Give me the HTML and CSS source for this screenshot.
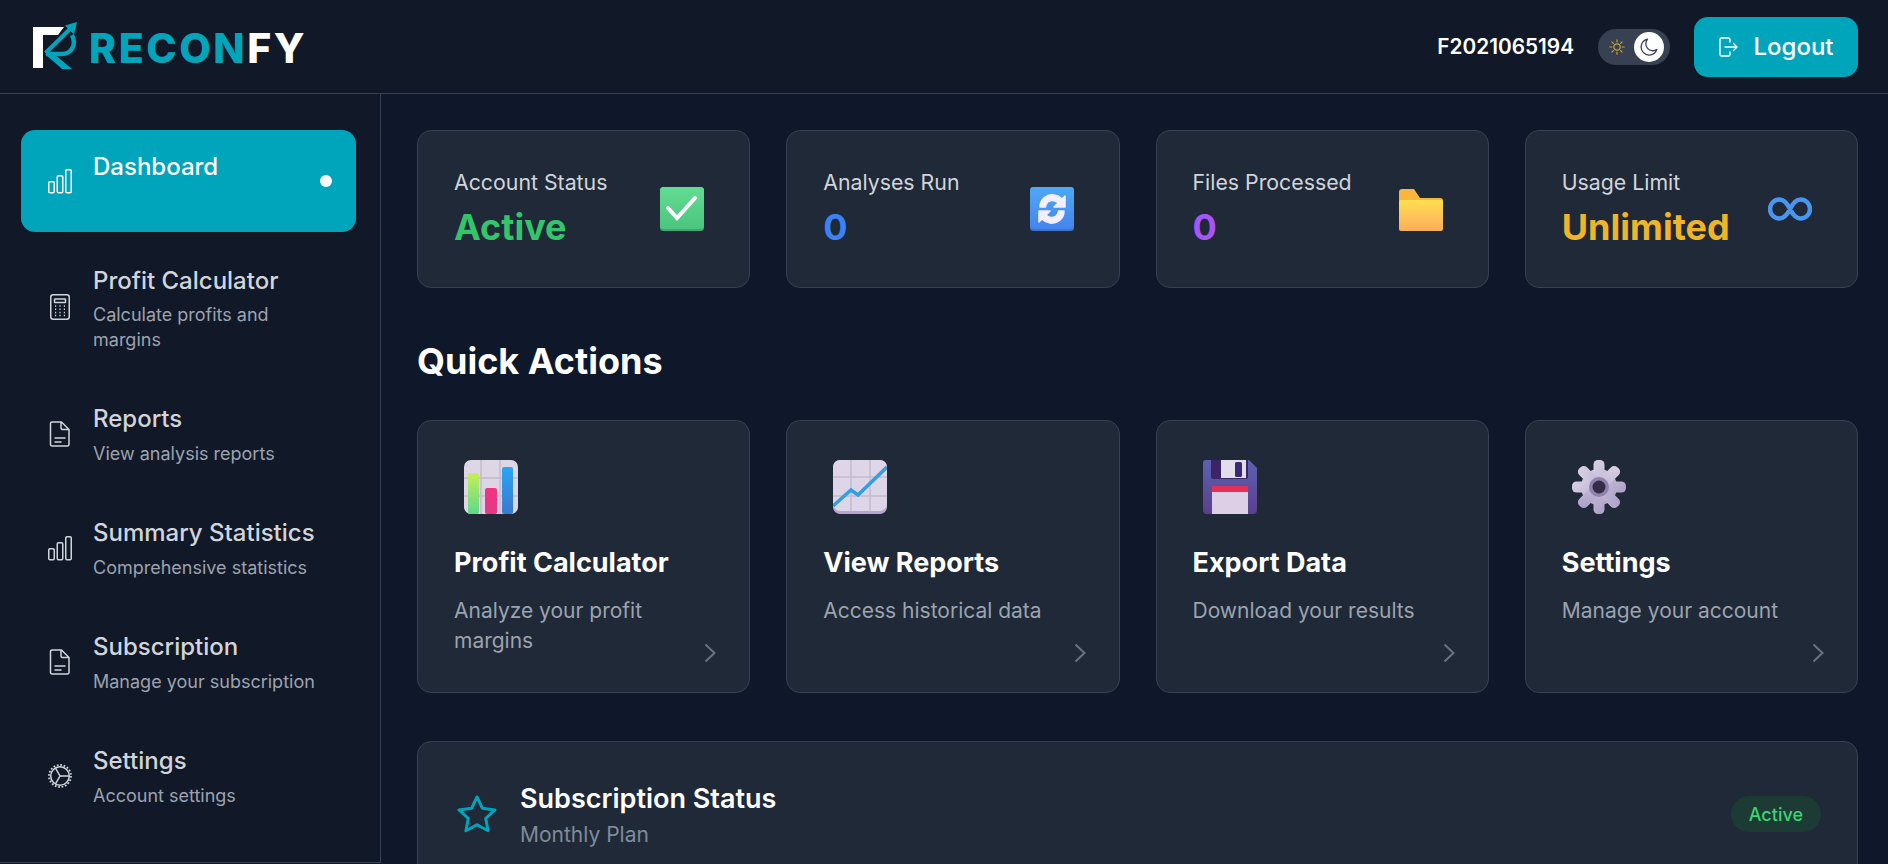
FILE: index.html
```html
<!DOCTYPE html>
<html lang="en">
<head>
    <meta charset="UTF-8">
    <meta name="viewport" content="width=device-width, initial-scale=1.0">
    <title>Reconfy Dashboard</title>
    <link rel="stylesheet" href="styles.css">
</head>
<body>
    <svg class="sprites" width="0" height="0">
        <defs>
            <linearGradient id="grad-green" x1="0" y1="0" x2="0" y2="1"><stop offset="0" stop-color="#63dc93"/><stop offset="1" stop-color="#4bc47f"/></linearGradient>
            <linearGradient id="grad-blue" x1="0" y1="0" x2="0" y2="1"><stop offset="0" stop-color="#4fa8f5"/><stop offset="1" stop-color="#4585ec"/></linearGradient>
            <linearGradient id="grad-folder" x1="0" y1="0" x2="0" y2="1"><stop offset="0" stop-color="#ffdf50"/><stop offset="1" stop-color="#fcac5c"/></linearGradient>
            <linearGradient id="grad-lime" x1="0" y1="0" x2="0" y2="1"><stop offset="0" stop-color="#c6ee58"/><stop offset="1" stop-color="#5ed98a"/></linearGradient>
            <linearGradient id="grad-pink" x1="0" y1="0" x2="0" y2="1"><stop offset="0" stop-color="#f0357f"/><stop offset="1" stop-color="#e43a86"/></linearGradient>
            <linearGradient id="grad-bar" x1="0" y1="0" x2="0" y2="1"><stop offset="0" stop-color="#2aa6f2"/><stop offset="1" stop-color="#3a78d0"/></linearGradient>
            <linearGradient id="grad-disk" x1="0" y1="0" x2="0" y2="1"><stop offset="0" stop-color="#5b62b2"/><stop offset="1" stop-color="#5b3f8c"/></linearGradient>
            <linearGradient id="grad-gear" gradientUnits="userSpaceOnUse" x1="6" y1="4" x2="48" y2="50"><stop offset="0" stop-color="#e0dbe8"/><stop offset="1" stop-color="#a596c4"/></linearGradient>
            <symbol id="i-bars" viewBox="0 0 24 24"><g fill="none" stroke="currentColor" stroke-width="1.5"><rect x="0.75" y="12.75" width="5.5" height="11" rx="1.2"/><rect x="9.25" y="6.75" width="5.5" height="17" rx="1.2"/><rect x="17.75" y="0.75" width="5.5" height="23" rx="1.2"/></g></symbol>
            <symbol id="i-doc" viewBox="0 0 24 26"><path d="M4 1h9.500l7.500 7.500v15a1.500 1.500 0 0 1-1.500 1.500h-15.500a1.500 1.500 0 0 1-1.500-1.500v-21a1.500 1.500 0 0 1 1.500-1.500z M13 1v6a1.500 1.500 0 0 0 1.500 1.500h6.500 M7 17h10 M7 21h6" fill="none" stroke="currentColor" stroke-width="1.5" stroke-linecap="round" stroke-linejoin="round"/></symbol>
            <symbol id="i-calc" viewBox="0 0 24 26"><g fill="none" stroke="currentColor" stroke-width="1.500"><rect x="2.750" y="0.750" width="18.500" height="24.500" rx="2.500"/><rect x="6.500" y="5" width="11" height="3.500" rx="0.500"/></g><path d="M7 12h1.200M11.400 12h1.200M15.800 12h1.200M7 15.200h1.200M11.400 15.200h1.200M15.800 15.200h1.200M7 18.400h1.200M11.400 18.400h1.200M15.800 18.400h1.200M7 21.400h1.200M11.400 21.400h1.200M15.800 21.400h1.200" stroke="currentColor" stroke-width="1.500"/></symbol>
            <symbol id="i-gear" viewBox="0 0 24 24"><g fill="none" stroke="currentColor"><circle cx="12" cy="12" r="9.300" stroke-width="1.500"/><circle cx="12" cy="12" r="11" stroke-width="1.800" stroke-dasharray="1.700 1.750"/><path d="M12 12L21 12M12 12L7.500 4.200M12 12L7.500 19.800" stroke-width="1.500"/></g></symbol>
        </defs>
    </svg>

    <header class="topbar">
        <div class="brand">
            <svg class="brand-mark" width="46" height="50" viewBox="0 0 46 50">
                <path d="M1 6H32L26 14H11V47H1Z" fill="#fff"/>
                <g fill="#00a5bb">
                    <path d="M45 1L33 4.500L42 13.500Z"/>
                    <path d="M13 33H22L40 48H30Z"/>
                </g>
                <g fill="none" stroke="#00a5bb">
                    <path d="M13.500 32L38 8" stroke-width="4"/>
                    <path d="M40 14C45 24 39 33 30 33H14" stroke-width="4.500"/>
                </g>
            </svg>
            <span class="brand-text">RECON<span class="brand-accent">FY</span></span>
        </div>
        <div class="topbar-right">
            <span class="user-id">F2021065194</span>
            <div class="theme-toggle">
                <svg class="sun" width="16" height="16" viewBox="0 0 16 16" fill="none" stroke="#c9a035" stroke-width="1.200" stroke-linecap="round"><circle cx="8" cy="8" r="3.200"/><path d="M8 .8v2M8 13.200v2M.8 8h2M13.200 8h2M2.900 2.900l1.400 1.400M11.700 11.700l1.400 1.400M2.900 13.100l1.400-1.400M11.700 4.300l1.400-1.400"/></svg>
                <span class="knob">
                    <svg width="18" height="18" viewBox="0 0 18 18" fill="none" stroke="#374151" stroke-width="1.300" stroke-linejoin="round"><path d="M7.500 1.200A8 8 0 1 0 16.800 11.500 7 7 0 0 1 7.500 1.200z"/></svg>
                </span>
            </div>
            <button class="logout">
                <svg width="20" height="20" viewBox="0 0 20 20" fill="none" stroke="#fff" stroke-width="1.400" stroke-linecap="round" stroke-linejoin="round"><path d="M12 5V2.500A1.500 1.500 0 0 0 10.500 1h-7A1.500 1.500 0 0 0 2 2.500v15A1.500 1.500 0 0 0 3.500 19h7a1.500 1.500 0 0 0 1.500-1.500V15"/><path d="M7 10h12M15.500 6.500L19 10l-3.500 3.500"/></svg>
                <span>Logout</span>
            </button>
        </div>
    </header>

    <div class="layout">
        <nav class="sidebar">
            <a class="nav-item active">
                <svg class="nav-icon"><use href="#i-bars"/></svg>
                <div class="nav-text">
                    <div class="nav-title">Dashboard</div>
                    <div class="nav-desc">&nbsp;</div>
                </div>
                <span class="nav-dot"></span>
            </a>
            <a class="nav-item">
                <svg class="nav-icon"><use href="#i-calc"/></svg>
                <div class="nav-text">
                    <div class="nav-title">Profit Calculator</div>
                    <div class="nav-desc">Calculate profits and margins</div>
                </div>
            </a>
            <a class="nav-item">
                <svg class="nav-icon"><use href="#i-doc"/></svg>
                <div class="nav-text">
                    <div class="nav-title">Reports</div>
                    <div class="nav-desc">View analysis reports</div>
                </div>
            </a>
            <a class="nav-item">
                <svg class="nav-icon"><use href="#i-bars"/></svg>
                <div class="nav-text">
                    <div class="nav-title">Summary Statistics</div>
                    <div class="nav-desc">Comprehensive statistics</div>
                </div>
            </a>
            <a class="nav-item">
                <svg class="nav-icon"><use href="#i-doc"/></svg>
                <div class="nav-text">
                    <div class="nav-title">Subscription</div>
                    <div class="nav-desc">Manage your subscription</div>
                </div>
            </a>
            <a class="nav-item">
                <svg class="nav-icon"><use href="#i-gear"/></svg>
                <div class="nav-text">
                    <div class="nav-title">Settings</div>
                    <div class="nav-desc">Account settings</div>
                </div>
            </a>
        </nav>

        <main class="content">
            <section class="card-grid">
                <div class="card stat-card">
                    <div>
                        <div class="stat-label">Account Status</div>
                        <div class="stat-value green">Active</div>
                    </div>
                    <svg class="stat-icon" viewBox="0 0 44 44"><rect x="0" y="0" width="44" height="44" rx="3.500" fill="#3fa96d"/><rect x="0" y="0" width="44" height="42" rx="3.500" fill="url(#grad-green)"/><path d="M8 21l9 10L35 11" fill="none" stroke="#fff" stroke-width="4" stroke-linecap="round"/></svg>
                </div>
                <div class="card stat-card">
                    <div>
                        <div class="stat-label">Analyses Run</div>
                        <div class="stat-value blue">0</div>
                    </div>
                    <svg class="stat-icon" viewBox="0 0 44 44"><rect x="0" y="0" width="44" height="44" rx="3.500" fill="#3c74d4"/><rect x="0" y="0" width="44" height="42" rx="3.500" fill="url(#grad-blue)"/><path d="M10 20C10 12 17 7 24 8C28 8.500 30 10 32 12L35 9V20H24L28 16C25 13 21 13 18 15C16 16.500 15.500 18 15.500 20ZM34 24C34 32 27 37 20 36C16 35.500 14 34 12 32L9 35V24H20L16 28C19 31 23 31 26 29C28 27.500 28.500 26 28.500 24Z" fill="#f3efff" stroke="#f3efff" stroke-width="1.500" stroke-linejoin="round"/></svg>
                </div>
                <div class="card stat-card">
                    <div>
                        <div class="stat-label">Files Processed</div>
                        <div class="stat-value purple">0</div>
                    </div>
                    <svg class="stat-icon" viewBox="0 0 44 44"><path d="M0 5a3 3 0 0 1 3-3h12l6 9h20a3 3 0 0 1 3 3v6H0z" fill="#fcb53c"/><path d="M0 15a2 2 0 0 1 2-2h40a2 2 0 0 1 2 2v27a2 2 0 0 1-2 2h-40a2 2 0 0 1-2-2z" fill="url(#grad-folder)"/></svg>
                </div>
                <div class="card stat-card">
                    <div>
                        <div class="stat-label">Usage Limit</div>
                        <div class="stat-value amber">Unlimited</div>
                    </div>
                    <svg class="stat-icon" viewBox="0 0 44 44"><path d="M22 22C20 18 17 12.500 11.500 12.500A9.500 9.500 0 0 0 11.500 31.500C17 31.500 20 26 22 22C24 18 27 12.500 32.500 12.500A9.500 9.500 0 0 1 32.500 31.500C27 31.500 24 26 22 22Z" fill="none" stroke="#4a96ef" stroke-width="4.500"/></svg>
                </div>
            </section>

            <h2 class="section-title">Quick Actions</h2>

            <section class="card-grid">
                <div class="card action-card">
                    <svg class="action-icon" viewBox="0 0 54 54">
                        <rect width="54" height="54" rx="7" fill="#ddd6e4"/>
                        <path d="M0 18h54M0 36h54M17 0v54M36 0v54" stroke="#c3bccb" stroke-width="1.500"/>
                        <rect x="4" y="13" width="11" height="41" rx="2" fill="url(#grad-lime)"/>
                        <rect x="21" y="28" width="12" height="26" rx="2" fill="url(#grad-pink)"/>
                        <rect x="38" y="7" width="11" height="47" rx="2" fill="url(#grad-bar)"/>
                    </svg>
                    <h3 class="action-title">Profit Calculator</h3>
                    <p class="action-desc">Analyze your profit margins</p>
                    <svg class="chevron" viewBox="0 0 12 20"><path d="M1.500 1.500L10.500 10l-9 8.500"/></svg>
                </div>
                <div class="card action-card">
                    <svg class="action-icon" viewBox="0 0 54 54">
                        <rect width="54" height="54" rx="7" fill="#b7a2d0"/>
                        <rect width="54" height="51" rx="7" fill="#ddd6e8"/>
                        <path d="M0 17h54M0 36h54M18 0v51M37 0v51" stroke="#c3bccb" stroke-width="1.500"/>
                        <path d="M0 46L18 30L25 35L54 7" fill="none" stroke="#339ee0" stroke-width="3.500"/>
                    </svg>
                    <h3 class="action-title">View Reports</h3>
                    <p class="action-desc">Access historical data</p>
                    <svg class="chevron" viewBox="0 0 12 20"><path d="M1.500 1.500L10.500 10l-9 8.500"/></svg>
                </div>
                <div class="card action-card">
                    <svg class="action-icon" viewBox="0 0 54 54">
                        <path d="M3 0H46L54 8V50a4 4 0 0 1-4 4H4a4 4 0 0 1-4-4V3a3 3 0 0 1 3-3z" fill="url(#grad-disk)"/>
                        <path d="M8 0H45V17a2 2 0 0 1-2 2H10a2 2 0 0 1-2-2z" fill="#3a2566"/>
                        <rect x="18" y="0" width="25" height="18" fill="#e3dcea"/>
                        <rect x="32" y="2" width="7" height="15" rx="1.500" fill="#3a2a72"/>
                        <rect x="9" y="26" width="36" height="28" fill="#ddd0e6"/>
                        <rect x="9" y="26" width="36" height="6" fill="#e72e58"/>
                    </svg>
                    <h3 class="action-title">Export Data</h3>
                    <p class="action-desc">Download your results</p>
                    <svg class="chevron" viewBox="0 0 12 20"><path d="M1.500 1.500L10.500 10l-9 8.500"/></svg>
                </div>
                <div class="card action-card">
                    <svg class="action-icon" viewBox="0 0 54 54">
                        <g fill="url(#grad-gear)">
                            <circle cx="27" cy="27" r="18"/>
                            <rect x="21.500" y="0" width="11" height="54" rx="4.500"/>
                            <rect x="0" y="21.500" width="54" height="11" rx="4.500"/>
                            <rect x="21.500" y="0" width="11" height="54" rx="4.500" transform="rotate(45 27 27)"/>
                            <rect x="21.500" y="0" width="11" height="54" rx="4.500" transform="rotate(-45 27 27)"/>
                        </g>
                        <circle cx="27" cy="27" r="10" fill="#8f83ab"/>
                        <circle cx="27" cy="27" r="6.500" fill="#352c4a"/>
                    </svg>
                    <h3 class="action-title">Settings</h3>
                    <p class="action-desc">Manage your account</p>
                    <svg class="chevron" viewBox="0 0 12 20"><path d="M1.500 1.500L10.500 10l-9 8.500"/></svg>
                </div>
            </section>

            <section class="card subscription">
                <div class="sub-info">
                    <svg class="sub-star" width="40" height="38" viewBox="0 0 40 38"><path d="M20 2l5.300 11.200 12.700 1.700-9.300 8.500 2.400 12.300L20 29.700 8.900 35.700l2.400-12.300L2 14.900l12.700-1.700z" fill="none" stroke="#00a5bb" stroke-width="3" stroke-linejoin="round"/></svg>
                    <div>
                        <div class="sub-title">Subscription Status</div>
                        <div class="sub-plan">Monthly Plan</div>
                    </div>
                </div>
                <span class="badge">Active</span>
            </section>
        </main>
    </div>
</body>
</html>
```

FILE: styles.css
```css
* {
    box-sizing: border-box;
}
html, body {
    height: 100%;
}
body {
    margin: 0;
    overflow: hidden;
    background: #0f172a;
    color: #fff;
    font-family: Inter, "Liberation Sans", sans-serif;
}
.sprites {
    display: block;
    height: 0;
}
.topbar {
    height: 94px;
    display: flex;
    align-items: center;
    justify-content: space-between;
    padding: 0 30px 0 32px;
    background: #111827;
    border-bottom: 1px solid #374151;
}
.brand {
    display: flex;
    align-items: center;
}
.brand-mark {
    margin-top: -2px;
}
.brand-text {
    margin-left: 11px;
    font-size: 41px;
    font-weight: 800;
    letter-spacing: 2.5px;
    color: #00a5bb;
    line-height: 1;
    margin-top: 3px;
}
.brand-accent {
    color: #fff;
}
.topbar-right {
    display: flex;
    align-items: center;
    gap: 24px;
}
.user-id {
    font-size: 20.8px;
    font-weight: 600;
}
.theme-toggle {
    width: 72px;
    height: 36px;
    padding: 0 6px 0 11px;
    border-radius: 18px;
    background: #374151;
    display: flex;
    align-items: center;
    justify-content: space-between;
}
.knob {
    width: 30px;
    height: 30px;
    border-radius: 50%;
    background: #fff;
    display: flex;
    align-items: center;
    justify-content: center;
}
.logout {
    width: 164px;
    height: 60px;
    display: flex;
    align-items: center;
    justify-content: center;
    gap: 15px;
    background: #00a5bb;
    color: #fff;
    border: none;
    border-radius: 14px;
    font-family: inherit;
    font-size: 24px;
    font-weight: 500;
    cursor: pointer;
}
.layout {
    display: flex;
    height: 770px;
}
.sidebar {
    width: 381px;
    height: 769px;
    flex-shrink: 0;
    padding: 36px 24px 0 21px;
    display: flex;
    flex-direction: column;
    gap: 12px;
    background: #111827;
    border-right: 1px solid #374151;
    border-bottom: 1px solid #374151;
}
.nav-item {
    display: flex;
    align-items: center;
    padding: 21.5px 24px 18.5px 27px;
    border-radius: 14px;
    color: #d1d5db;
}
.nav-item.active {
    background: #00a5bb;
    color: #fff;
}
.nav-icon {
    width: 24px;
    height: 26px;
    flex-shrink: 0;
    margin: -3px 21px 0 0;
}
.nav-text {
    flex: 1;
}
.nav-title {
    font-size: 24px;
    font-weight: 500;
    line-height: 30px;
}
.nav-desc {
    margin-top: 7.5px;
    font-size: 18px;
    line-height: 24.5px;
    color: #9ca3af;
}
.nav-dot {
    width: 12px;
    height: 12px;
    margin-top: -3px;
    border-radius: 50%;
    background: #fff;
}
.content {
    flex: 1;
    min-width: 0;
    padding: 36px 30px 0 36px;
}
.card-grid {
    display: grid;
    grid-template-columns: repeat(4, 1fr);
    gap: 36px;
}
.card {
    background: #1f2937;
    border: 1px solid #374151;
    border-radius: 14px;
}
.stat-card {
    height: 158px;
    padding: 37px 9px 0 36px;
    display: flex;
    justify-content: space-between;
}
.stat-label {
    font-size: 21.3px;
    line-height: 28px;
    color: #d1d5db;
}
.stat-value {
    margin-top: 9px;
    font-size: 36px;
    font-weight: 700;
    line-height: 44px;
}
.stat-icon {
    width: 44px;
    height: 44px;
    margin: 19px 36px 0 0;
    flex-shrink: 0;
}
.green { color: #34c56a; }
.blue { color: #3b82f6; }
.purple { color: #a855f7; }
.amber { color: #f0b429; }
.section-title {
    margin: 51px 0 37px;
    font-size: 36px;
    font-weight: 700;
    line-height: 44px;
}
.action-card {
    position: relative;
    padding: 36px;
}
.action-icon {
    display: block;
    width: 54px;
    height: 54px;
    margin: 3px 0 32px 10px;
}
.action-title {
    margin: 0;
    font-size: 27px;
    font-weight: 700;
    line-height: 34px;
}
.action-desc {
    margin: 16px 0 0;
    font-size: 21px;
    line-height: 30px;
    color: #9ca3af;
}
.chevron {
    position: absolute;
    right: 33px;
    bottom: 29px;
    width: 12px;
    height: 20px;
    fill: none;
    stroke: #6b7280;
    stroke-width: 2;
}
.subscription {
    margin-top: 48px;
    height: 200px;
    padding: 39px 36px 0 39px;
    display: flex;
    justify-content: space-between;
    align-items: flex-start;
}
.sub-info {
    display: flex;
    align-items: center;
    gap: 23px;
}
.sub-star {
    margin-top: 0;
}
.sub-title {
    font-size: 27px;
    font-weight: 600;
    line-height: 36px;
}
.sub-plan {
    margin-top: 6px;
    font-size: 21px;
    line-height: 24px;
    color: #7f8b99;
}
.badge {
    margin-top: 15px;
    height: 36px;
    padding: 0 18px;
    border-radius: 18px;
    display: flex;
    align-items: center;
    background: #1c3b35;
    color: #3dd46f;
    font-size: 18px;
    font-weight: 500;
}
```
